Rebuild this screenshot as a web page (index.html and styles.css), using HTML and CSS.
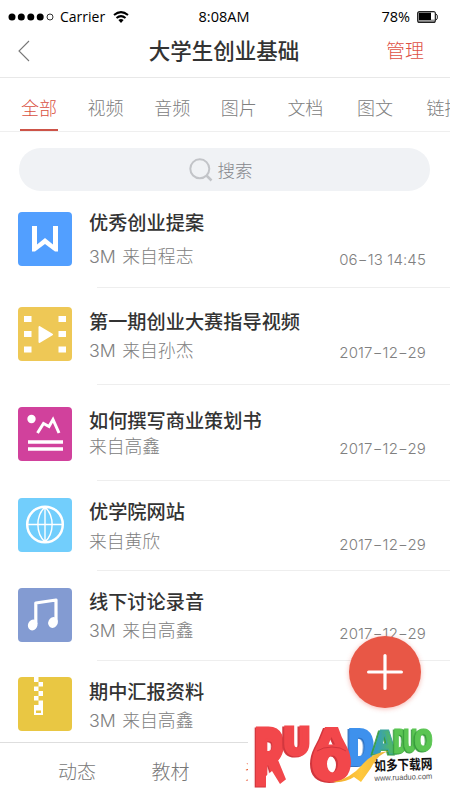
FILE: index.html
```html
<!DOCTYPE html>
<html lang="zh-CN">
<head>
<meta charset="utf-8">
<title>大学生创业基础</title>
<link rel="stylesheet" href="styles.css">
</head>
<body>
<div class="screen">
  <header class="status">
    <div class="carrier">
      <svg width="46" height="10" viewBox="0 0 46 10"><g fill="#000"><circle cx="4" cy="5" r="3.5"/><circle cx="13.3" cy="5" r="3.5"/><circle cx="22.8" cy="5" r="3.5"/><circle cx="32.2" cy="5" r="3.5"/></g><circle cx="42" cy="5" r="3" fill="none" stroke="#000" stroke-width=".8"/></svg>
      <span class="carrier-name">Carrier</span>
      <svg width="16" height="12" viewBox="0 0 16 12" fill="none" stroke="#000" stroke-width="2"><path d="M1 4Q8-1.8 15 4M3.5 7Q8 3.3 12.5 7"/><path d="M5.4 8.9Q8 7 10.6 8.9L8 12Z" fill="#000" stroke="none"/></svg>
    </div>
    <span class="clock">8:08AM</span>
    <div class="battery">
      <span>78%</span>
      <svg width="21" height="12" viewBox="0 0 21 12"><rect x=".6" y=".6" width="17.8" height="10.8" rx="2" fill="#999" stroke="#222" stroke-width="1.1"/><path d="M14 1.500h3.500v7H14z" fill="#fff"/><path d="M2 2h12v7H2z"/><path d="M19 3q1.400.4 1.400 3T19 9" fill="none" stroke="#222"/></svg>
    </div>
  </header>
  <div class="navbar">
    <svg class="back" width="13" height="22" viewBox="0 0 13 22" fill="none" stroke="#777" stroke-width="1.1"><path d="M11 1L1 11l10 10"/></svg>
    <h1>大学生创业基础</h1>
    <span class="manage">管理</span>
  </div>
  <nav class="tabs">
    <span class="tab active">全部</span><span class="tab">视频</span><span class="tab">音频</span><span class="tab">图片</span><span class="tab">文档</span><span class="tab spaced">图文</span><span class="tab spaced">链接</span>
  </nav>
  <div class="search">
    <svg width="24" height="24" viewBox="0 0 24 24" fill="none" stroke="#c2c4c8" stroke-width="2"><circle cx="10.8" cy="10.8" r="9.5"/><path d="M17.5 17.5l5 5" stroke-width="2.5"/></svg>
    <span>搜索</span>
  </div>
  <main class="files">
    <article class="file proposal">
      <svg class="icon" viewBox="0 0 54 54"><rect width="54" height="54" rx="4" fill="#529fff"/><path d="M14 14h5v18.500l8-6.500 8 6.500V14h5v25.500h-3L27 32l-10 7.500h-3z" fill="#fff"/></svg>
      <div class="info"><h2>优秀创业提案</h2><p>3M 来自程志</p></div><time>06−13 14:45</time>
    </article>
    <article class="file video">
      <svg class="icon" viewBox="0 0 54 54"><rect width="54" height="54" rx="4" fill="#eec856"/><path d="M6 9h7.500v6H6zM40.500 9H48v6h-7.500zM6 24h7.500v6H6zM40.500 24H48v6h-7.500zM6 39.500h7.500v6H6zM40.500 39.500H48v6h-7.500z" fill="#fff"/><path d="M21.500 20v15l12.500-7.500z" fill="#fff" stroke="#fff" stroke-width="2" stroke-linejoin="round"/></svg>
      <div class="info"><h2>第一期创业大赛指导视频</h2><p>3M 来自孙杰</p></div><time>2017−12−29</time>
    </article>
    <article class="file plan">
      <svg class="icon" viewBox="0 0 54 54"><rect width="54" height="54" rx="4" fill="#d1419c"/><circle cx="13.500" cy="12" r="4.200" fill="#fff"/><path d="M19.500 26l6-9.500 5.500 3 4-7L41 26" fill="none" stroke="#fff" stroke-width="3"/><path d="M10 35h35M10 42h35" stroke="#fff" stroke-width="3.400"/></svg>
      <div class="info"><h2>如何撰写商业策划书</h2><p>来自高鑫</p></div><time>2017−12−29</time>
    </article>
    <article class="file website">
      <svg class="icon" viewBox="0 0 54 54"><rect width="54" height="54" rx="4" fill="#72cefc"/><g fill="none" stroke="#fff"><circle cx="27" cy="26.500" r="17.800" stroke-width="2.500"/><path d="M9 26.500h36M27 9v35M27 9c-9.500 9-9.500 26 0 35M27 9c9.500 9 9.500 26 0 35" stroke-width="1.400"/></g></svg>
      <div class="info"><h2>优学院网站</h2><p>来自黄欣</p></div><time>2017−12−29</time>
    </article>
    <article class="file audio">
      <svg class="icon" viewBox="0 0 54 54"><rect width="54" height="54" rx="4" fill="#839bd2"/><path d="M17.800 36V15L38 12v22" fill="none" stroke="#fff" stroke-width="3.200" stroke-linejoin="round"/><ellipse cx="14.700" cy="37" rx="4.700" ry="5.500" fill="#fff" transform="rotate(25 14.700 37)"/><ellipse cx="35" cy="34.500" rx="4.700" ry="5.500" fill="#fff" transform="rotate(25 35 34.500)"/></svg>
      <div class="info"><h2>线下讨论录音</h2><p>3M 来自高鑫</p></div><time>2017−12−29</time>
    </article>
    <article class="file archive">
      <svg class="icon" viewBox="0 0 54 54"><rect width="54" height="54" rx="4" fill="#e9c743"/><path d="M16 0h4.500v5H25v4.500h-4.500V14H25v5h-4.500v4.500H25V38h-9V28h4.500v-4.500H16V19h4.500v-5H16V9.500h4.500V5H16z" fill="#fff"/><path d="M18 33.500h5v2.500h-5z" fill="#e9c743"/></svg>
      <div class="info"><h2>期中汇报资料</h2><p>3M 来自高鑫</p></div>
    </article>
  </main>
  <footer class="bottom"><span>动态</span><span>教材</span><span class="current">资料</span></footer>
  <button class="add" aria-label="添加"><svg width="36" height="36" viewBox="0 0 36 36" stroke="#fff" stroke-width="3.200" stroke-linecap="round"><path d="M18 1.600v32.800M1.600 18h32.800"/></svg></button>
  <svg class="brand" viewBox="248 716 202 84">
    <defs>
      <linearGradient id="teal" x1="0" x2="1"><stop offset="0" stop-color="#2d91dc"/><stop offset=".7" stop-color="#4eb66d"/></linearGradient>
      <linearGradient id="ribbon" x1="0" x2="1"><stop offset="0" stop-color="#f1a92b"/><stop offset=".5" stop-color="#ffc83e"/><stop offset="1" stop-color="#e9b13a"/></linearGradient>
    </defs>
    <rect x="248" y="716" width="202" height="84" fill="#fff"/>
    <g class="letters">
      <text class="blue" transform="translate(347 765) scale(.76 1)" font-size="50">D</text>
      <text class="green teal" transform="translate(373 754) scale(.94 1)" font-size="34">A</text>
      <text class="green" transform="translate(393 753) scale(.62 1)" font-size="33">D</text>
      <text class="green" transform="translate(403 752) scale(.60 1)" font-size="32">U</text>
      <text class="green" transform="translate(414 751) scale(.80 1)" font-size="30">O</text>
      <text class="red wide" transform="translate(253 785) scale(.62 1)" font-size="80">R</text>
      <path d="M266 792V776L272 771 280 784 294 773V792Z" fill="#fff"/>
      <text class="red heavy" transform="translate(283 755) scale(.96 1)" font-size="38">U</text>
      <path class="red" fill-rule="evenodd" d="M325 727h13Q341 737 347 747Q351 755 351 763Q350 782 331 782Q312 781 312 763Q312 755 316 747Q321 738 325 727ZM331.500 737l-3 7.500h6.500zM332.500 755.500a5.500 8.500 0 1 0 0 17a5.500 8.500 0 1 0 0-17Z"/>
    </g>
    <path d="M317 751Q323 747 332 747T346 751" fill="none" stroke="#c92f38" stroke-width=".8"/>
    <path d="M333 782Q350 779 362 765Q373 752 389 751Q378 754 371 768L361 782L354 777Q345 783 333 782Z" fill="url(#ribbon)"/>
    <g transform="rotate(-2.200 374 770)">
      <text class="brand-cn" x="374.500" y="771" textLength="58" lengthAdjust="spacingAndGlyphs">如多下载网</text>
      <text class="brand-url" x="374" y="781" textLength="58" lengthAdjust="spacingAndGlyphs">www.ruaduo.com</text>
    </g>
  </svg>
</div>
</body>
</html>
```
FILE: styles.css
```css
* { box-sizing: border-box; }
body { margin: 0; background: #fff; }
.screen { position: relative; width: 450px; height: 800px; overflow: hidden; background: #fff; font-family: "Noto Sans CJK SC", sans-serif; font-weight: 300; color: #808080; }
svg { display: block; flex: none; }
h1, h2, p { margin: 0; }
.status { height: 30px; padding: 4px 12px 0 8px; display: grid; grid-template-columns: 1fr auto 1fr; align-items: center; color: #000; font: 400 14px/20px "Open Sans", sans-serif; }
.carrier, .battery { display: flex; align-items: center; }
.carrier { gap: 6px; }
.carrier-name { width: 47px; }
.clock { font-size: 14.5px; padding-left: 2px; }
.battery { justify-content: flex-end; gap: 7px; }
.battery span { font-size: 14.5px; }
.navbar { height: 48px; padding: 0 26px 8px 18px; display: grid; grid-template-columns: 60px 1fr 54px; align-items: center; border-bottom: 1px solid #e8e8e8; }
.back { margin-top: 2px; }
.navbar h1 { font-size: 21.5px; line-height: 30px; font-weight: 500; color: #333; text-align: center; }
.manage { color: #de5145; font-size: 19px; line-height: 28px; text-align: right; padding-top: 1px; }
.tabs { height: 54px; padding-left: 20px; display: flex; gap: 28.6px; border-bottom: 1px solid #efefef; }
.tab { flex: none; width: 38px; height: 53px; padding-top: 15px; text-align: center; font-size: 18px; line-height: 28px; white-space: nowrap; }
.tab.spaced { margin-left: 3px; }
.tab.active { color: #d9503f; border-bottom: 2px solid #cd5348; }
.search { height: 43px; margin: 16px 20px 0 19px; border-radius: 22px; background: #f0f2f5; display: flex; align-items: center; justify-content: center; gap: 5px; padding-right: 8px; font-size: 17.5px; color: #85878c; }
.file { --icon: 17px; --title: 16px; --meta: 46px; --date: 53px; position: relative; height: 90px; padding-left: 18px; padding-right: 24px; display: grid; grid-template-columns: 54px 1fr auto; column-gap: 17px; align-items: start; }
.file:not(:last-child)::after { content: ""; position: absolute; left: 97px; right: 0; bottom: 0; height: 1px; background: #eee; }
.icon { width: 54px; height: 54px; margin-top: var(--icon); }
.info { display: grid; grid-template-rows: var(--meta) 28px; white-space: nowrap; }
.file h2 { padding-top: var(--title); font-size: 19.2px; line-height: 28px; font-weight: 500; color: #333; }
.file p { font-family: Inter, "Noto Sans CJK SC", sans-serif; font-size: 17.8px; line-height: 28px; word-spacing: 1.5px; }
.file time { margin-top: var(--date); font: 300 15px/20px Inter, sans-serif; letter-spacing: .15px; color: #808080; }
.proposal { height: 97px; --icon: 21px; --title: 17px; --meta: 52px; --date: 59px; }
.video { height: 97px; --icon: 19px; --title: 19px; --meta: 49px; --date: 55px; }
.plan { height: 96px; --icon: 22px; --title: 21px; --meta: 48px; --date: 54px; }
.website { --meta: 47px; --date: 54px; }
.audio { --date: 53px; }
.archive { height: 81px; --icon: 16px; }
.bottom { height: 58px; border-top: 1px solid #dedede; padding: 12px 0 0 58px; display: flex; gap: 55.5px; font-size: 19px; line-height: 31px; color: #777; }
.bottom .current { color: #e45142; }
.add { position: absolute; left: 349px; top: 636px; width: 72px; height: 72px; padding: 0; border: 0; border-radius: 50%; background: #e85746; display: grid; place-items: center; box-shadow: 0 1px 5px rgba(232, 78, 62, .4); }
.brand { position: absolute; left: 248px; top: 716px; width: 202px; height: 84px; }
.letters { font-family: "Open Sans", sans-serif; font-weight: 800; }
.red { fill: #f2474b; filter: drop-shadow(-1.5px 1px 0 #d1363d); }
text.red { stroke: #f2474b; stroke-width: 1.5px; }
text.wide, text.heavy { stroke-width: 3px; }
.blue { fill: #3e91ed; stroke: #3e91ed; stroke-width: 2px; filter: drop-shadow(-2px 1px 0 #2f72c2); }
.green { fill: #5bc553; stroke: #5bc553; stroke-width: 1px; filter: drop-shadow(-1.5px 1px 0 #369c3b); }
.teal { fill: url(#teal); stroke: #3fa5a0; }
.brand-cn { font: 700 14px "Noto Sans CJK SC", sans-serif; fill: #111; }
.brand-url { font: 400 8px "Liberation Sans", sans-serif; fill: #555; }
```
